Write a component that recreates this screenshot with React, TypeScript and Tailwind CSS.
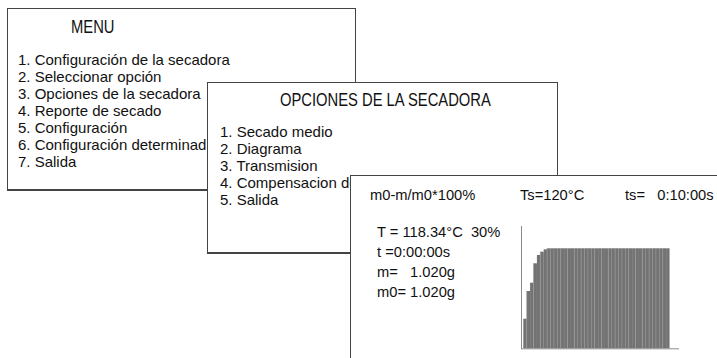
const menuItems = [
  "1. Configuración de la secadora",
  "2. Seleccionar opción",
  "3. Opciones de la secadora",
  "4. Reporte de secado",
  "5. Configuración",
  "6. Configuración determinada",
  "7. Salida",
];

// the last option is hidden behind the drying window past "de"
const optionItems = [
  "1. Secado medio",
  "2. Diagrama",
  "3. Transmision",
  "4. Compensacion de",
  "5. Salida",
];

// bar tops (svg y) for the first few bars, the rest sit on the plateau
const rampTops = [92.7, 65, 56.7, 37.3, 29, 25.7, 23.3];

const DryingChart = () => {
  const barW = 3.4;
  const count = 43;
  const bars = Array.from({ length: count }, (_, i) => ({
    x: 2.3 + i * barW,
    top: i < rampTops.length ? rampTops[i] : 22.3,
  }));

  return (
    <svg width="160" height="126" viewBox="0 0 160 126" className="block">
      {bars.map((b, i) => (
        <rect key={i} x={b.x} y={b.top} width={barW + 0.05} height={122.3 - b.top} fill="#737373" />
      ))}
      {bars.map((b, i) =>
        i % 2 === 1 ? (
          <line key={"g" + i} x1={b.x} y1={b.top} x2={b.x} y2={122.3} stroke="#9c9c9c" strokeWidth="0.6" />
        ) : null
      )}
      <line x1="0.5" y1="0" x2="0.5" y2="123" stroke="#8a8a8a" strokeWidth="1" />
      <line x1="0" y1="122.8" x2="158" y2="122.8" stroke="#8a8a8a" strokeWidth="1" />
    </svg>
  );
};

const WindowTitle = ({ children, className }: { children: string; className: string }) => (
  <div className={className}>
    <span className="inline-block origin-left scale-x-[0.82] text-[18px] leading-[20px] whitespace-nowrap">
      {children}
    </span>
  </div>
);

export default function App() {
  return (
    <div
      className="relative w-[717px] h-[358px] overflow-hidden bg-white text-[#111]"
      style={{ fontFamily: '"Liberation Sans", Arial, sans-serif' }}
    >
      {/* MENU window */}
      <div className="absolute left-[7px] top-[8px] w-[349px] h-[183px] bg-white border border-b-2 border-[#444]">
        <WindowTitle className="pl-[63px] pt-[7px] h-[27px]">MENU</WindowTitle>
        <ul className="mt-[15px] pl-[10px] text-[15px] leading-[17px] whitespace-nowrap">
          {menuItems.map((item) => (
            <li key={item}>{item}</li>
          ))}
        </ul>
      </div>

      {/* OPCIONES window */}
      <div className="absolute left-[207px] top-[82px] w-[351px] h-[172px] bg-white border border-b-2 border-[#444]">
        <WindowTitle className="pl-[72px] pt-[6px] h-[26px]">OPCIONES DE LA SECADORA</WindowTitle>
        <ul className="mt-[14px] pl-[12px] text-[15px] leading-[17px] whitespace-nowrap">
          {optionItems.map((item) => (
            <li key={item}>{item}</li>
          ))}
        </ul>
      </div>

      {/* Secado medio window */}
      <div className="absolute left-[350px] top-[175px] w-[400px] h-[220px] bg-white border border-[#444]">
        <div className="flex pt-[11px] pl-[19px] text-[14.7px] leading-[17px] whitespace-pre">
          <span className="w-[150px]">m0-m/m0*100%</span>
          <span className="w-[105px]">Ts=120°C</span>
          <span>ts=   0:10:00s</span>
        </div>
        <div className="flex mt-[18px]">
          <div className="w-[170px] pl-[26px] text-[14.7px] leading-[20px] whitespace-pre">
            <div>T = 118.34°C  30%</div>
            <div>t =0:00:00s</div>
            <div>m=   1.020g</div>
            <div>m0= 1.020g</div>
          </div>
          <div className="mt-[4px]">
            <DryingChart />
          </div>
        </div>
      </div>
    </div>
  );
}
